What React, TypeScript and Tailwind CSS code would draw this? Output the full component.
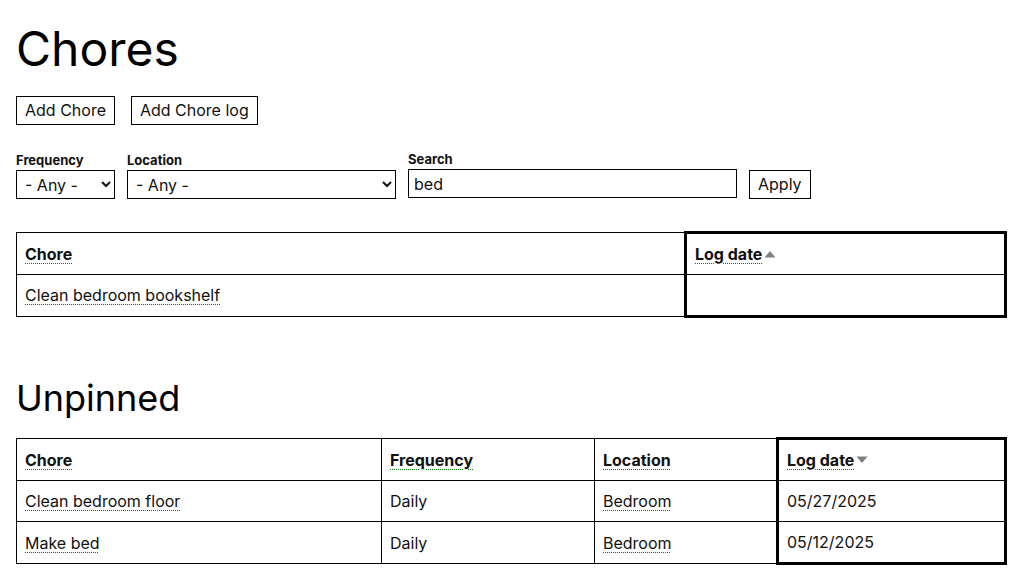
import React from 'react';

type Row = { chore: string; frequency?: string; location?: string; logDate: string };

const pinned: Row[] = [{ chore: 'Clean bedroom bookshelf', logDate: '' }];

const unpinned: Row[] = [
  { chore: 'Clean bedroom floor', frequency: 'Daily', location: 'Bedroom', logDate: '05/27/2025' },
  { chore: 'Make bed', frequency: 'Daily', location: 'Bedroom', logDate: '05/12/2025' },
];

const linkCls =
  'underline decoration-dotted decoration-1 decoration-[#008000] underline-offset-[3px]';

function SortArrow({ dir }: { dir: 'up' | 'down' }) {
  return (
    <svg width="12" height="8" viewBox="0 0 12 8" className="inline-block ml-[2px] align-[2px]">
      {dir === 'up' ? (
        <path d="M0.5 7.5 L6 1 L11.5 7.5 Z" fill="#808080" />
      ) : (
        <path d="M0.5 0.5 L6 7 L11.5 0.5 Z" fill="#808080" />
      )}
    </svg>
  );
}

function Cell({
  children,
  head,
  sorted,
  last,
  className = '',
}: {
  children?: React.ReactNode;
  head?: boolean;
  sorted?: boolean;
  last?: boolean;
  className?: string;
}) {
  const base = 'border border-black px-2 py-[9px] leading-[22px] text-left align-middle';
  const sortCls = sorted
    ? `border-l-[3px] border-r-[3px] ${head ? 'border-t-[3px]' : ''} ${last ? 'border-b-[3px]' : ''}`
    : '';
  if (head) {
    return <th className={`${base} ${sortCls} font-bold ${className}`}>{children}</th>;
  }
  return <td className={`${base} ${sortCls} ${className}`}>{children}</td>;
}

export default function App() {
  return (
    <div className="min-h-screen bg-white px-4 pb-6 text-[#111] text-base font-['Inter',sans-serif]">
      <h1 className="pt-5 text-[48px] leading-[58px] font-normal text-black">Chores</h1>

      <div className="mt-[18px] flex gap-4">
        <button className="border border-black px-2 py-1 leading-[19px]">Add Chore</button>
        <button className="border border-black px-2 py-1 leading-[19px]">Add Chore log</button>
      </div>

      <div className="mt-[26px] flex items-end gap-3">
        <div className="flex flex-col">
          <label className="mb-[2px] text-[13px] font-bold leading-[16px]">Frequency</label>
          <select className="w-[99px] border border-black h-[29px] px-1">
            <option>- Any -</option>
          </select>
        </div>
        <div className="flex flex-col">
          <label className="mb-[2px] text-[13px] font-bold leading-[16px]">Location</label>
          <select className="w-[269px] border border-black h-[29px] px-1">
            <option>- Any -</option>
          </select>
        </div>
        <div className="flex flex-col mb-px">
          <label className="mb-[2px] text-[13px] font-bold leading-[16px]">Search</label>
          <input
            className="w-[329px] border border-black h-[29px] px-[5px]"
            defaultValue="bed"
          />
        </div>
        <button className="border border-black px-2 py-1 leading-[19px]">Apply</button>
      </div>

      <table className="mt-[32px] w-[991px] border-collapse">
        <thead>
          <tr>
            <Cell head className="w-[669px]">
              <span className={linkCls}>Chore</span>
            </Cell>
            <Cell head sorted>
              <span className={linkCls}>Log date</span>
              <SortArrow dir="up" />
            </Cell>
          </tr>
        </thead>
        <tbody>
          {pinned.map((r, i) => (
            <tr key={r.chore}>
              <Cell className="pb-[10px]">
                <span className={linkCls}>{r.chore}</span>
              </Cell>
              <Cell sorted last={i === pinned.length - 1}>
                {r.logDate}
              </Cell>
            </tr>
          ))}
        </tbody>
      </table>

      <h2 className="mt-[58px] text-[36px] leading-[44px] font-normal text-black">Unpinned</h2>

      <table className="mt-[17px] w-[991px] border-collapse">
        <thead>
          <tr>
            <Cell head className="w-[365px]">
              <span className={linkCls}>Chore</span>
            </Cell>
            <Cell head className="w-[213px]">
              <span className={linkCls}>Frequency</span>
            </Cell>
            <Cell head className="w-[183px]">
              <span className={linkCls}>Location</span>
            </Cell>
            <Cell head sorted>
              <span className={linkCls}>Log date</span>
              <SortArrow dir="down" />
            </Cell>
          </tr>
        </thead>
        <tbody>
          {unpinned.map((r, i) => (
            <tr key={r.chore}>
              <Cell>
                <span className={linkCls}>{r.chore}</span>
              </Cell>
              <Cell>{r.frequency}</Cell>
              <Cell>
                <span className={linkCls}>{r.location}</span>
              </Cell>
              <Cell sorted last={i === unpinned.length - 1}>
                {r.logDate}
              </Cell>
            </tr>
          ))}
        </tbody>
      </table>
    </div>
  );
}
